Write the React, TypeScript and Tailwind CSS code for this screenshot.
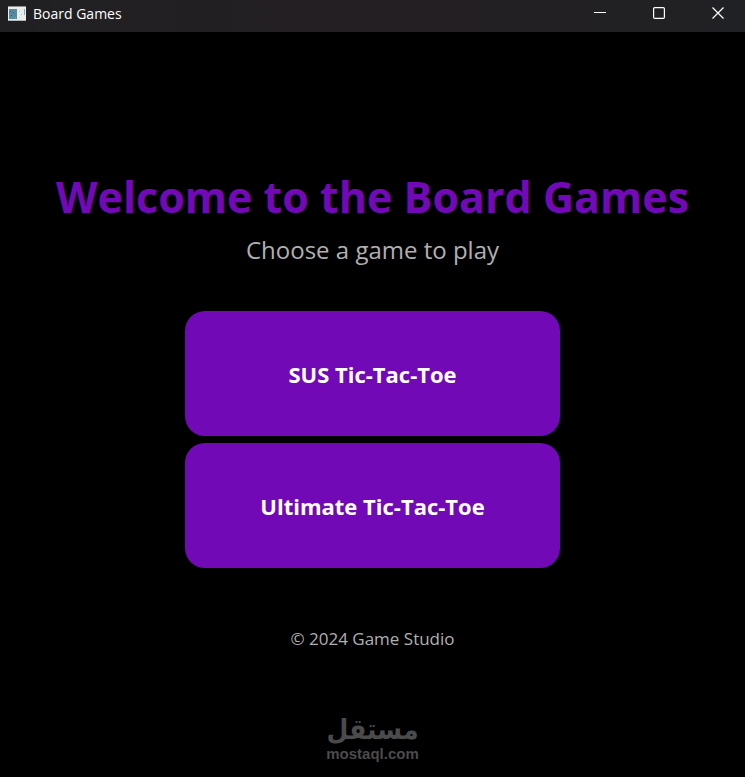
import type { ReactNode } from "react";

interface Game {
  id: string;
  title: string;
}

const games: Game[] = [
  { id: "sus", title: "SUS Tic-Tac-Toe" },
  { id: "ultimate", title: "Ultimate Tic-Tac-Toe" },
];

function AppIcon() {
  return (
    <svg className="h-4 w-[18px]" viewBox="0 0 18 16" shapeRendering="crispEdges" aria-hidden="true">
      <rect x="0" y="0" width="18" height="15" fill="#e9eded" />
      <rect x="0" y="0" width="18" height="1" fill="#8d8f91" />
      <rect x="1" y="3" width="8" height="10" fill="#568a9c" />
      <rect x="2" y="5" width="1" height="1" fill="#2f6075" />
      <rect x="5" y="6" width="1" height="1" fill="#2f6075" />
      <rect x="3" y="9" width="1" height="1" fill="#2f6075" />
      <rect x="7" y="11" width="1" height="1" fill="#c09a62" />
      <rect x="11" y="5" width="1" height="1" fill="#a9c3d8" />
      <rect x="13" y="8" width="1" height="1" fill="#a9c3d8" />
      <rect x="11" y="11" width="1" height="1" fill="#d8c8a0" />
      <rect x="16" y="3" width="1" height="6" fill="#86a7b5" />
      <rect x="0" y="14" width="18" height="1" fill="#b4b6b7" />
    </svg>
  );
}

function WindowButton({ label, children }: { label: string; children: ReactNode }) {
  return (
    <button type="button" aria-label={label} className="flex h-full w-[59px] items-center justify-center pb-1.5 pl-1 hover:bg-white/10">
      <svg className="h-3 w-3" viewBox="0 0 12 12" fill="none" stroke="#ffffff" strokeWidth="1.2">
        {children}
      </svg>
    </button>
  );
}

function TitleBar() {
  return (
    <header className="flex h-8 shrink-0 items-center justify-between bg-gradient-to-r from-[#202022] via-[#241f23] to-[#202124]">
      <div className="flex items-center gap-[7px] pb-1 pl-2">
        <AppIcon />
        <span className="text-sm leading-5 text-white">Board Games</span>
      </div>
      <div className="flex h-full">
        <WindowButton label="Minimize">
          <path d="M0 5.5H12" strokeWidth="1" />
        </WindowButton>
        <WindowButton label="Maximize">
          <rect x="0.6" y="0.6" width="10.8" height="10.8" rx="1.2" />
        </WindowButton>
        <WindowButton label="Close">
          <path d="M0.5 0.5L11.5 11.5M11.5 0.5L0.5 11.5" />
        </WindowButton>
      </div>
    </header>
  );
}

function Watermark() {
  return (
    <div className="flex flex-col items-center text-[#4b4b4b]">
      <span lang="ar" dir="rtl" className="font-['DejaVu_Sans_Condensed','DejaVu_Sans',sans-serif] text-[28px] leading-8 font-bold">
        مستقل
      </span>
      <span className="font-['Liberation_Sans',sans-serif] text-[15px] leading-4 font-bold">mostaql.com</span>
    </div>
  );
}

export default function App() {
  return (
    <div className="flex min-h-screen flex-col bg-black font-['Open_Sans','Noto_Sans',sans-serif]">
      <TitleBar />
      <main className="flex flex-1 flex-col items-center px-4 pt-[132px] pb-4">
        <h1 className="text-center text-[43px] leading-[66px] font-bold text-[#7209b7]">Welcome to the Board Games</h1>
        <p className="text-center text-2xl leading-10 text-[#b0b0b0]">Choose a game to play</p>

        <div className="mt-[41px] flex w-full max-w-[375px] flex-col gap-[7px]">
          {games.map((game) => (
            <button
              key={game.id}
              type="button"
              className="h-[125px] rounded-[20px] bg-[#7209b7] pt-0.5 text-[22px] font-bold text-white hover:bg-[#8a1fd0]"
            >
              {game.title}
            </button>
          ))}
        </div>

        <footer className="mt-[57px] flex flex-col items-center gap-[61px]">
          <p className="text-[17px] leading-7 text-[#b0b0b0]">© 2024 Game Studio</p>
          <Watermark />
        </footer>
      </main>
    </div>
  );
}
